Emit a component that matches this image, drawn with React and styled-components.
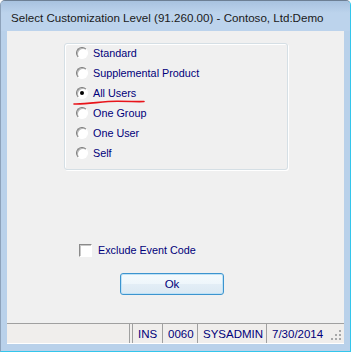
import React from "react";
import styled, { createGlobalStyle } from "styled-components";

const GlobalStyle = createGlobalStyle`
  html, body {
    margin: 0;
    padding: 0;
    background: #ffffff;
  }
`;

const Window = styled.div`
  position: relative;
  width: 351px;
  height: 352px;
  box-sizing: border-box;
  display: flex;
  flex-direction: column;
  background: #b9d1ea;
  border-top: 1px solid #6d7f94;
  border-left: 1px solid #8da2ba;
  border-right: 1px solid #33c6ec;
  border-bottom: 1px solid #33c6ec;
  border-radius: 5px 5px 0 0;
  overflow: hidden;
`;

const TitleBar = styled.div`
  height: 30px;
  display: flex;
  align-items: center;
  padding-left: 10px;
  padding-top: 2px;
  box-sizing: border-box;
  background: linear-gradient(#a8c2df, #bcd3ec 40%, #bcd3ec);
  font-family: "Liberation Sans", Arial, sans-serif;
  font-size: 11.6px;
  color: #1a1a1a;
  white-space: nowrap;
`;

const Client = styled.div`
  flex: 1;
  margin: 0 6px 7px 6px;
  background: #f0f0f0;
  display: flex;
  flex-direction: column;
  border-bottom: 1px solid #ffffff;
`;

const Main = styled.div`
  flex: 1;
  display: flex;
  flex-direction: column;
  font-family: "Liberation Sans", Arial, sans-serif;
  font-size: 10.8px;
  color: #00007a;
`;

const GroupBox = styled.div`
  position: relative;
  margin: 12px 0 0 57px;
  width: 224px;
  height: 127px;
  box-sizing: border-box;
  border: 1px solid #d5dfe5;
  border-radius: 3px;
  box-shadow: inset 1px 1px 0 #ffffff, 1px 1px 0 #ffffff;
  padding: 0 0 0 11px;
  display: flex;
  flex-direction: column;
`;

const OptionList = styled.div`
  margin-top: -1px;
  display: flex;
  flex-direction: column;
`;

const OptionRow = styled.label`
  height: 20px;
  display: flex;
  align-items: center;
  gap: 5px;
  white-space: nowrap;
`;

const Radio = styled.span`
  width: 12px;
  height: 12px;
  box-sizing: border-box;
  border-radius: 50%;
  border: 1px solid;
  border-color: #7a7a7a #ffffff #ffffff #7a7a7a;
  background: #ffffff;
  box-shadow: inset 1px 1px 0 #b5b5b5;
  display: flex;
  align-items: center;
  justify-content: center;

  &::after {
    content: "";
    width: 4px;
    height: 4px;
    border-radius: 50%;
    background: ${(p) => (p.checked ? "#000000" : "transparent")};
  }
`;

const Annotation = styled.svg`
  position: absolute;
  left: 8px;
  top: 56px;
  width: 74px;
  height: 6px;
  overflow: visible;
`;

const CheckRow = styled.label`
  margin: 70px 0 0 72px;
  height: 20px;
  display: flex;
  align-items: center;
  gap: 6px;
`;

const CheckBox = styled.span`
  width: 13px;
  height: 13px;
  box-sizing: border-box;
  border: 1px solid;
  border-color: #8a8a8a #ffffff #ffffff #8a8a8a;
  background: #ffffff;
  box-shadow: inset 1px 1px 0 #c8c8c8;
`;

const OkButton = styled.button`
  margin: 13px 0 0 113px;
  width: 104px;
  height: 22px;
  box-sizing: border-box;
  border: 1px solid #3c94cf;
  border-radius: 3px;
  background: linear-gradient(#f4fafd, #eef6fb 50%, #e3eef6 50%, #dbe9f3);
  box-shadow: inset 0 0 0 1px #bfe2f6;
  font-family: "Liberation Sans", Arial, sans-serif;
  font-size: 11.5px;
  color: #00007a;
  padding: 0;
`;

const StatusBar = styled.div`
  height: 19px;
  border-top: 1px solid #a0a0a0;
  background: #f0eeec;
  display: flex;
  align-items: center;
  font-family: "Liberation Sans", Arial, sans-serif;
  font-size: 11.5px;
  color: #00007a;
`;

const StatusSpacer = styled.div`
  width: 123px;
  height: 100%;
  box-sizing: border-box;
  border-right: 1px solid #a0a0a0;
`;

const StatusPanel = styled.div`
  height: 100%;
  box-sizing: border-box;
  width: ${(p) => p.w}px;
  margin-left: ${(p) => p.gap || 0}px;
  border-left: 1px solid #a0a0a0;
  padding-left: 5px;
  display: flex;
  align-items: center;
  white-space: nowrap;
`;

const Grip = styled.svg`
  margin-left: auto;
  margin-right: 2px;
  align-self: flex-end;
  margin-bottom: 2px;
`;

const options = [
  { label: "Standard" },
  { label: "Supplemental Product" },
  { label: "All Users", checked: true },
  { label: "One Group" },
  { label: "One User" },
  { label: "Self" },
];

export default function App() {
  return (
    <>
      <GlobalStyle />
      <Window>
        <TitleBar>Select Customization Level (91.260.00) - Contoso, Ltd:Demo</TitleBar>
        <Client>
          <Main>
            <GroupBox>
              <OptionList>
                {options.map((o) => (
                  <OptionRow key={o.label}>
                    <Radio checked={o.checked} />
                    {o.label}
                  </OptionRow>
                ))}
              </OptionList>
              <Annotation viewBox="0 0 74 6">
                <path
                  d="M1 4 C 15 4.5, 30 1, 45 1.2 S 65 1.8, 71 1.5"
                  fill="none"
                  stroke="#e8141a"
                  strokeWidth="1.6"
                  strokeLinecap="round"
                />
              </Annotation>
            </GroupBox>
            <CheckRow>
              <CheckBox />
              Exclude Event Code
            </CheckRow>
            <OkButton>Ok</OkButton>
          </Main>
          <StatusBar>
            <StatusSpacer />
            <StatusPanel w={30} gap={2}>INS</StatusPanel>
            <StatusPanel w={35}>0060</StatusPanel>
            <StatusPanel w={69}>SYSADMIN</StatusPanel>
            <StatusPanel w={60}>7/30/2014</StatusPanel>
            <Grip width="11" height="11" viewBox="0 0 11 11">
              {[
                [8, 0],
                [8, 4],
                [4, 4],
                [8, 8],
                [4, 8],
                [0, 8],
              ].map(([x, y]) => (
                <rect key={`${x}-${y}`} x={x} y={y} width="2" height="2" fill="#a8a8a8" />
              ))}
            </Grip>
          </StatusBar>
        </Client>
      </Window>
    </>
  );
}
